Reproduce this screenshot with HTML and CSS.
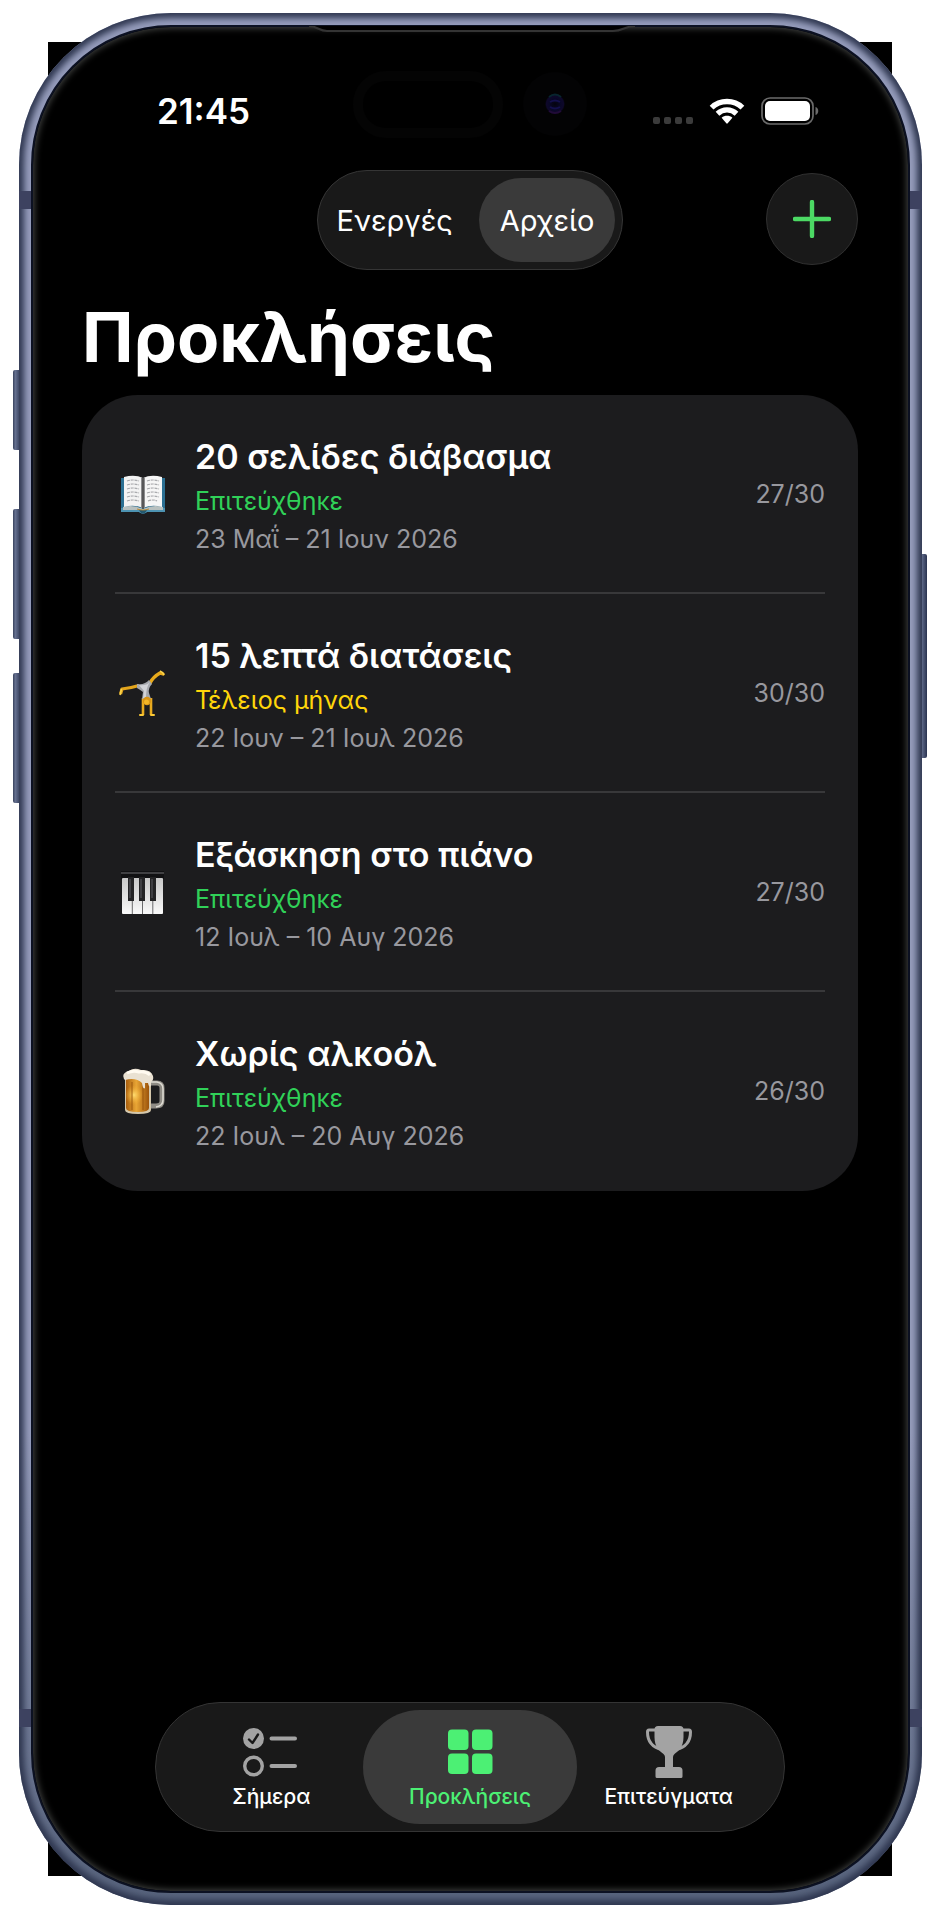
FILE: index.html
```html
<!DOCTYPE html>
<html lang="el">
<head>
<meta charset="utf-8">
<meta name="viewport" content="width=device-width, initial-scale=1">
<title>Προκλήσεις</title>
<link rel="stylesheet" href="styles.css">
</head>
<body>
<div class="stage">
  <div class="phone">
    <span class="key key-action"></span>
    <span class="key key-up"></span>
    <span class="key key-down"></span>
    <span class="key key-power"></span>
    <div class="frame">
      <span class="antenna antenna-top"></span>
      <span class="antenna antenna-bottom"></span>
      <div class="screen">
        <svg class="earpiece" viewBox="0 0 326 10" aria-hidden="true">
          <path d="M0 0C8 0 10 5 18 5H304C314 5 316 0 326 0Z" fill="#000"/>
          <path d="M0 0C8 0 10 5 18 5H304C314 5 316 0 326 0" fill="none" stroke="#343434" stroke-width="2"/>
        </svg>
        <svg class="island" viewBox="0 0 240 70" aria-hidden="true">
          <defs>
            <radialGradient id="lens"><stop offset="0" stop-color="#04030f"/><stop offset=".6" stop-color="#0a0828"/><stop offset=".85" stop-color="#0e082a"/><stop offset="1" stop-color="#030308"/></radialGradient>
          </defs>
          <rect x="6" y="6" width="140" height="57" rx="28" fill="none" stroke="#040404" stroke-width="10"/>
          <circle cx="203" cy="34" r="32" fill="#030304"/>
          <circle cx="203" cy="34" r="10" fill="url(#lens)"/>
          <path d="M197 27q6-5 12 0" fill="none" stroke="#08252e" stroke-width="2"/>
          <path d="M198 32q5-3 10 0M198 37q5 3 10 0" fill="none" stroke="#130f4c" stroke-width="2"/>
          <path d="M197 41q6 4 12 0" fill="none" stroke="#210b38" stroke-width="2"/>
        </svg>

        <div class="status">
          <time class="clock">21:45</time>
          <div class="indicators">
            <svg class="cell" viewBox="0 0 40 7" aria-hidden="true"><g fill="#3b3b3b"><rect width="7" height="7" rx="2"/><rect x="11" width="7" height="7" rx="2"/><rect x="22" width="7" height="7" rx="2"/><rect x="33" width="7" height="7" rx="2"/></g></svg>
            <svg class="wifi" viewBox="0 0 36 27" aria-hidden="true">
              <g fill="none" stroke="#fff" stroke-width="5.4"><path d="M2.6 9.6C11 1.4 25 1.4 33.400 9.600"/><path d="M8.500 15.700C14 10.600 22 10.600 27.500 15.700"/></g>
              <path d="M12.600 19.800C15.600 17.200 20.400 17.200 23.400 19.800L18.700 25.300Q18 26 17.300 25.300Z" fill="#fff"/>
            </svg>
            <svg class="battery" viewBox="0 0 58 28" aria-hidden="true">
              <rect x="1" y="1" width="51" height="26" rx="8" fill="none" stroke="#6b6b6b" stroke-width="1.700"/>
              <rect x="4" y="4" width="45" height="20" rx="5" fill="#fff"/>
              <path d="M54.500 10C58.200 11 58.200 17 54.500 18Z" fill="#6b6b6b"/>
            </svg>
          </div>
        </div>

        <header class="toolbar">
          <div class="segments">
            <button class="segment" type="button">Ενεργές</button>
            <button class="segment segment-on" type="button" aria-pressed="true">Αρχείο</button>
          </div>
          <button class="add" type="button" aria-label="Προσθήκη">
            <svg class="plus" viewBox="0 0 38 38" aria-hidden="true"><path d="M19 2V36M2 19H36" stroke="#4cd964" stroke-width="4.400" stroke-linecap="round"/></svg>
          </button>
        </header>

        <main class="content">
          <h1 class="title">Προκλήσεις</h1>
          <ul class="card">
            <li class="row">
              <svg class="emoji" viewBox="0 0 48 48" aria-hidden="true">
                <g transform="translate(0 -3)">
                <path d="M2 11H46V45H28Q24 48 20 45H2Z" fill="#2b6f92"/>
                <path d="M2 41H46V45H28Q24 48 20 45H2Z" fill="#4d93b2"/>
                <path d="M4 40Q14 37 24 42Q34 37 44 40V43H4Z" fill="#b8c0bf"/>
                <path d="M5 10Q16 7 24 11V41Q15 37 5 40Z" fill="#f3f3f3"/>
                <path d="M24 11Q32 7 43 10V40Q33 37 24 41Z" fill="#f6f6f6"/>
                <path d="M22 11H26V41H22Z" fill="#8d8d8f"/><path d="M24 11V42" stroke="#3b3b3d" stroke-width="1.300"/>
                <path d="M8 14Q14 12 20 14M8 18Q14 16 20 18M8 22Q14 20 20 22M8 26Q14 24 20 26M8 30Q14 28 20 30M8 34Q14 32 20 34M28 14Q34 12 40 14M28 18Q34 16 40 18M28 22Q34 20 40 22M28 26Q34 24 40 26M28 30Q34 28 40 30M29 34Q34 32 38 34" fill="none" stroke="#a9aaad" stroke-width="1.200" stroke-dasharray="3 .8"/>
                <path d="M20 43H28L26 46H22Z" fill="#24596f"/><path d="M18 42Q24 44 30 42" fill="none" stroke="#b58b3c" stroke-width="1.200"/>
                </g>
              </svg>
              <div class="info">
                <h2 class="name">20 σελίδες διάβασμα</h2>
                <p class="state">Επιτεύχθηκε</p>
                <p class="dates">23 Μαΐ – 21 Ιουν 2026</p>
              </div>
              <span class="count">27/30</span>
            </li>
            <li class="row">
              <svg class="emoji" viewBox="0 0 48 48" aria-hidden="true">
                <path d="M20 16.500Q12 19 3 20L1.500 25" fill="none" stroke="#e3a51c" stroke-width="3.200" stroke-linejoin="round"/>
                <path d="M31 14Q34 8 41 4L44 5" fill="none" stroke="#e8aa1c" stroke-width="3.400" stroke-linejoin="round" stroke-linecap="round"/>
                <path d="M41 2Q44 3 45 6M2.500 20L1 26" fill="none" stroke="#fbd44c" stroke-width="1.600"/>
                <path d="M24 29V46M32 29V46" stroke="#e9ab1f" stroke-width="2.600"/>
                <path d="M24 46H21M32 46H35" stroke="#fbc936" stroke-width="2" stroke-linecap="round"/>
                <path d="M18 15Q26 16 30 11L33 15Q29 19 30 24L32 30H23L24 23Q20 20 18 19Z" fill="#a6a8ad"/>
                <path d="M20 16Q27 17 31 13Q27 18 27 29H24L25 22Z" fill="#d2d3d7"/>
                <circle cx="28" cy="32" r="4.200" fill="#d99516"/><circle cx="27.500" cy="33" r="2.500" fill="#f3b626"/>
              </svg>
              <div class="info">
                <h2 class="name">15 λεπτά διατάσεις</h2>
                <p class="state state-perfect">Τέλειος μήνας</p>
                <p class="dates">22 Ιουν – 21 Ιουλ 2026</p>
              </div>
              <span class="count">30/30</span>
            </li>
            <li class="row">
              <svg class="emoji" viewBox="0 0 48 48" aria-hidden="true">
                <defs><linearGradient id="ivory" x2="0" y2="1"><stop stop-color="#c8c8c8"/><stop offset="1" stop-color="#fafafa"/></linearGradient></defs>
                <rect x="2" y="3" width="43" height="8" fill="#111113"/><path d="M2 5H45" stroke="#404043" stroke-width="2"/>
                <rect x="3" y="10" width="41" height="36" rx="1" fill="url(#ivory)"/>
                <path d="M13.300 10V46M23.500 10V46M33.800 10V46" stroke="#69696b" stroke-width="1"/>
                <path d="M9 9H15V33H9ZM20 9H26V33H20ZM31 9H37V33H31Z" fill="#232325"/>
                <path d="M11 11V30M22 11V30M33 11V30" stroke="#4a4a4d" stroke-width="1.500"/>
              </svg>
              <div class="info">
                <h2 class="name">Εξάσκηση στο πιάνο</h2>
                <p class="state">Επιτεύχθηκε</p>
                <p class="dates">12 Ιουλ – 10 Αυγ 2026</p>
              </div>
              <span class="count">27/30</span>
            </li>
            <li class="row">
              <svg class="emoji" viewBox="0 0 48 48" aria-hidden="true">
                <defs>
                  <linearGradient id="ale"><stop stop-color="#a85e0e"/><stop offset=".45" stop-color="#e8a535"/><stop offset="1" stop-color="#9c540b"/></linearGradient>
                  <radialGradient id="glow"><stop stop-color="#ffdc70"/><stop offset="1" stop-color="#f5ae30" stop-opacity="0"/></radialGradient>
                </defs>
                <g transform="translate(-2 1)">
                <path d="M33 15H40Q45 15 45 20V33Q45 38 39 38H34" fill="none" stroke="#8f8c85" stroke-width="5"/>
                <path d="M34 14H40Q46 15 46 21V32Q46 38 39 39" fill="none" stroke="#dedbd3" stroke-width="1.500"/>
                <path d="M8 10H34V42Q34 46 21 46Q8 46 8 42Z" fill="#d5c8ac"/>
                <path d="M9 10H32V40Q32 44 21 44Q9 44 9 40Z" fill="url(#ale)"/>
                <ellipse cx="17" cy="27" rx="9" ry="10" fill="url(#glow)"/>
                <path d="M15 14V42M26 14V42" stroke="#8e4d0a" stroke-opacity=".55" stroke-width="1.500"/>
                <path d="M7 11Q4 5 12 3Q17 -1 24 2Q34 1 36 8Q37 12 34 14V18Q32 20 31 15H28V20Q26 22 25 15Q19 9 8 12Z" fill="#e9e1d2"/>
                <path d="M10 5Q16 2 22 4Q29 3 33 7" fill="none" stroke="#fffaf0" stroke-width="3"/>
                </g>
              </svg>
              <div class="info">
                <h2 class="name">Χωρίς αλκοόλ</h2>
                <p class="state">Επιτεύχθηκε</p>
                <p class="dates">22 Ιουλ – 20 Αυγ 2026</p>
              </div>
              <span class="count">26/30</span>
            </li>
          </ul>
        </main>

        <nav class="tabs">
          <a class="tab" href="#today">
            <svg class="tab-icon" viewBox="0 0 60 54" aria-hidden="true">
              <circle cx="12.500" cy="14.500" r="10.500" fill="#a3a3a3"/>
              <path d="M8 15.500L11.500 19L17 10.500" fill="none" stroke="#191919" stroke-width="2.400" stroke-linecap="round" stroke-linejoin="round"/>
              <circle cx="12.500" cy="42" r="8.800" fill="none" stroke="#a3a3a3" stroke-width="3.400"/>
              <path d="M30.500 14.500H54M30.500 42H54" stroke="#a3a3a3" stroke-width="4" stroke-linecap="round"/>
            </svg>
            <span>Σήμερα</span>
          </a>
          <a class="tab tab-on" href="#challenges" aria-current="page">
            <svg class="tab-icon" viewBox="0 0 60 54" aria-hidden="true"><g fill="#4cf074"><rect x="8" y="5.500" width="20.500" height="20.500" rx="4"/><rect x="32" y="5.500" width="20.500" height="20.500" rx="4"/><rect x="8" y="29.500" width="20.500" height="20.500" rx="4"/><rect x="32" y="29.500" width="20.500" height="20.500" rx="4"/></g></svg>
            <span>Προκλήσεις</span>
          </a>
          <a class="tab" href="#achievements">
            <svg class="tab-icon" viewBox="0 0 60 54" aria-hidden="true">
              <path d="M16 6H10Q8.500 6 8.500 8C8.500 18 14 23.500 23 25.500M44 6H50Q51.500 6 51.500 8C51.500 18 46 23.500 37 25.500" fill="none" stroke="#a3a3a3" stroke-width="3"/>
              <path d="M19 2H41Q44.500 2 44.500 5.500V13C44.500 23 39.500 27 35.500 30Q34 31.500 34 33V43H40Q43.500 43 43.500 46.500V52.500Q43.500 54 42 54H18Q16.500 54 16.500 52.500V46.500Q16.500 43 20 43H26V33Q26 31.500 24.500 30C20.500 27 15.500 23 15.500 13V5.500Q15.500 2 19 2Z" fill="#a3a3a3"/>
            </svg>
            <span>Επιτεύγματα</span>
          </a>
        </nav>
      </div>
    </div>
  </div>
</div>
</body>
</html>
```

FILE: styles.css
```css
*,
*::before,
*::after {
  box-sizing: border-box;
}

body {
  margin: 0;
  background: #fff;
  color: #fff;
  font-family: Inter, "Open Sans", sans-serif;
}

h1,
h2,
p,
ul {
  margin: 0;
  padding: 0;
}

button {
  border: 0;
  padding: 0;
  color: inherit;
  font: inherit;
}

svg {
  display: block;
}

.stage {
  position: relative;
  display: flex;
  min-height: 100vh;
  padding: 13px 18px 13px 19px;
}

.stage::before {
  content: "";
  position: absolute;
  inset: 42px 48px;
  background: #000;
}

.phone {
  position: relative;
  display: flex;
  flex: 1;
}

.key {
  position: absolute;
  left: -6px;
  width: 8px;
  border-radius: 2px 0 0 2px;
  background: linear-gradient(90deg, #39435e, #65708f 30%, #2a3350);
}

.key-action { top: 357px; height: 80px; }
.key-up { top: 496px; height: 130px; }
.key-down { top: 660px; height: 130px; }

.key-power {
  top: 541px;
  right: -5px;
  left: auto;
  height: 204px;
  border-radius: 0 2px 2px 0;
}

.frame {
  position: relative;
  display: flex;
  flex: 1;
  padding: 12px;
  border-radius: 152px;
  background: linear-gradient(#959cbb, #959cbb 75%, #56627b);
  box-shadow: inset 0 0 6px 5px #2f3750;
}

.antenna {
  position: absolute;
  right: 0;
  left: 0;
  height: 18px;
  background: #3d4260;
}

.antenna-top { top: 178px; }
.antenna-bottom { bottom: 178px; }

.screen {
  position: relative;
  display: flex;
  flex: 1;
  flex-direction: column;
  padding: 0 50px 59px 49px;
  border: 2px solid #0c1122;
  border-radius: 140px;
  background: #000;
  box-shadow: inset 0 0 7px 1px #484a48;
}

.earpiece {
  position: absolute;
  top: -1px;
  left: 50%;
  width: 326px;
  margin-left: -162px;
}

.island {
  position: absolute;
  top: 43px;
  left: 50%;
  width: 240px;
  margin-left: -119px;
}

.status {
  position: relative;
  display: flex;
  align-items: center;
  justify-content: space-between;
  margin: 62px 39px 0 75px;
}

.clock {
  font-size: 35px;
  font-weight: 600;
  line-height: 44px;
}

.indicators {
  display: flex;
  align-items: center;
  gap: 16px;
}

.cell {
  width: 40px;
  margin-top: 18px;
}

.wifi { width: 36px; }
.battery { width: 58px; }

.toolbar {
  display: grid;
  grid-template-columns: 1fr auto 1fr;
  align-items: center;
  margin-top: 37px;
}

.segments {
  display: flex;
  grid-column: 2;
  height: 100px;
  padding: 7px;
  border: 1px solid #353535;
  border-radius: 50px;
  background: #191919;
}

.segment {
  padding: 0 21px;
  border-radius: 42px;
  background: none;
  font-size: 29px;
}

.segment:first-child {
  padding: 0 26px 0 12px;
}

.segment.segment-on {
  background: #3a3a3a;
}

.add {
  display: grid;
  place-items: center;
  justify-self: end;
  width: 92px;
  height: 92px;
  margin-bottom: 2px;
  border: 1px solid #303030;
  border-radius: 50%;
  background: #191919;
}

.plus { width: 38px; }

.title {
  margin-top: 25px;
  font-size: 69px;
  font-weight: 700;
  line-height: 84px;
}

.card {
  margin-top: 16px;
  padding: 0 33px;
  border-radius: 56px;
  background: #1c1c1e;
  list-style: none;
}

.row {
  display: flex;
  align-items: center;
  gap: 28px;
  min-height: 199px;
  border-bottom: 2px solid #38383a;
}

.row:last-child {
  border-bottom-color: transparent;
}

.emoji {
  width: 48px;
  margin-left: 4px;
}

.info {
  flex: 1;
  padding-top: 3px;
}

.name {
  margin-bottom: 1px;
  font-size: 34px;
  font-weight: 600;
  line-height: 48px;
}

.state,
.dates,
.count {
  font-size: 25px;
  line-height: 38px;
}

.state { color: #30d158; }
.state-perfect { color: #ffd60a; }

.dates,
.count {
  color: #98989e;
}

.tabs {
  display: grid;
  grid-template-columns: repeat(3, 1fr);
  width: 630px;
  max-width: 100%;
  margin: auto auto 0;
  padding: 7px 16px;
  border: 1px solid #343434;
  border-radius: 65px;
  background: #191919;
}

.tab {
  position: relative;
  display: flex;
  flex-direction: column;
  align-items: center;
  gap: 6px;
  padding: 14px 0;
  color: #fff;
  font-size: 21px;
  font-weight: 500;
  line-height: 26px;
  text-decoration: none;
}

.tab > * {
  position: relative;
}

.tab-icon { width: 60px; }

.tab-on {
  color: #4cf074;
}

.tab-on::before {
  content: "";
  position: absolute;
  inset: 0 -8px;
  border-radius: 57px;
  background: #3a3a3a;
}
```
